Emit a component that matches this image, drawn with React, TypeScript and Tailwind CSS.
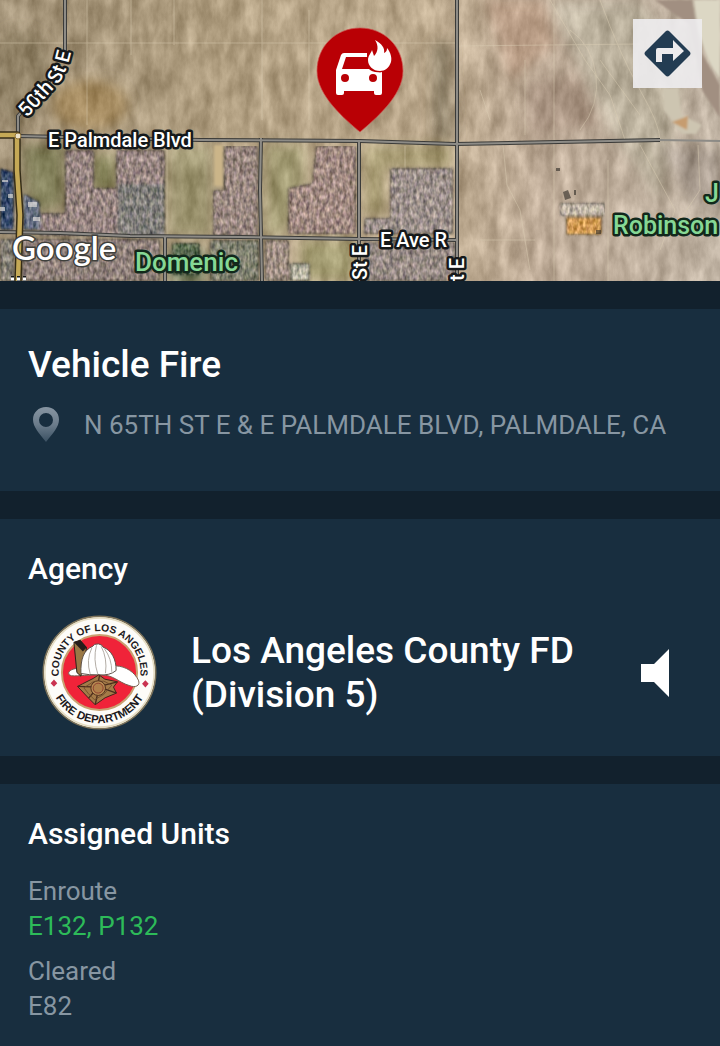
import type { ReactNode } from "react";

const mapLabel =
  "font-['Roboto',sans-serif] font-medium fill-white stroke-[#15181a] stroke-[5px] [paint-order:stroke] [stroke-linejoin:round]";
const placeLabel =
  "font-['Roboto',sans-serif] font-medium fill-[#86d895] stroke-[#12281b] stroke-[5px] [paint-order:stroke] [stroke-linejoin:round]";

const roads = [
  "M65 0V52M52 78L18 116V136",
  "M18 136L200 140L360 141L455 144L660 140",
  "M261 138L260 190L262 281",
  "M359 141V281",
  "M457 0V281",
  "M0 232L60 233L130 236L240 237L360 239L457 240",
  "M165 237V281",
];

function SatelliteMap() {
  return (
    <svg
      viewBox="0 0 720 281"
      preserveAspectRatio="xMidYMid slice"
      className="block h-[281px] w-full"
      role="img"
      aria-label="Satellite map of E Palmdale Blvd"
    >
      <defs>
        <linearGradient id="ground" x1="0" x2="1" y1="0" y2="0">
          <stop offset="0" stopColor="#a09075" />
          <stop offset="0.3" stopColor="#b09e80" />
          <stop offset="0.6" stopColor="#bca98d" />
          <stop offset="0.75" stopColor="#bfac98" />
          <stop offset="1" stopColor="#bfb2a2" />
        </linearGradient>
        <filter id="soft" x="-20%" y="-20%" width="140%" height="140%">
          <feGaussianBlur stdDeviation="6" />
        </filter>
        <filter id="edge" x="-20%" y="-20%" width="140%" height="140%">
          <feGaussianBlur stdDeviation="1.2" />
        </filter>
        <filter id="terrain" x="0" y="0" width="100%" height="100%" colorInterpolationFilters="sRGB">
          <feTurbulence type="fractalNoise" baseFrequency="0.07 0.03" numOctaves="5" seed="8" />
          <feGaussianBlur stdDeviation="0.6" />
          <feColorMatrix values="1 0 0 0 0  1 0 0 0 0  1 0 0 0 0  0 0 0 0 1" result="n" />
          <feComposite in="SourceGraphic" in2="n" operator="arithmetic" k1="0" k2="1" k3="0.34" k4="-0.17" />
          <feComposite in2="SourceGraphic" operator="in" />
        </filter>
        <filter id="houses" x="0" y="0" width="100%" height="100%" colorInterpolationFilters="sRGB">
          <feGaussianBlur in="SourceGraphic" stdDeviation="1.5" result="s" />
          <feTurbulence type="fractalNoise" baseFrequency="0.3 0.16" numOctaves="2" seed="3" />
          <feGaussianBlur stdDeviation="0.7" />
          <feColorMatrix values="1 0 0 0 0  0.9 0.1 0 0 0  0.85 0 0.15 0 0  0 0 0 0 1" result="n" />
          <feComposite in="s" in2="n" operator="arithmetic" k1="0" k2="1" k3="0.65" k4="-0.32" />
          <feComposite in2="s" operator="in" />
        </filter>
      </defs>

      <g filter="url(#terrain)">
        <rect width="720" height="281" fill="url(#ground)" />
        <g filter="url(#soft)">
          <ellipse cx="20" cy="75" rx="32" ry="45" fill="#918266" />
          <ellipse cx="90" cy="105" rx="38" ry="25" fill="#a58b60" />
          <path d="M22 145H64V205L30 215Z" fill="#807e59" />
          <path d="M92 155H116V190H92Z" fill="#85835a" />
          <path d="M168 145H212V236H168Z" fill="#a09873" />
          <path d="M265 145H305V190L283 235H265Z" fill="#a19a72" />
          <path d="M364 145H452V168H385V215H364Z" fill="#a99d74" />
          <path d="M300 240H355V281H300Z" fill="#a19a70" />
          <path d="M432 45L450 40L455 140H432Z" fill="#8d8068" />
          <path d="M485 0H545L555 45L510 80Z" fill="#b79b84" />
          <path d="M525 85L580 75L600 125L530 135Z" fill="#a5907e" />
          <path d="M548 0H640L690 60L660 200L610 130Z" fill="#b9af9b" />
          <path d="M660 145L720 150V210L690 200Z" fill="#a6998c" />
          <path d="M170 250H205V281H170Z" fill="#66785a" />
        </g>
      </g>
      <g filter="url(#edge)">
        <path d="M655 0H692L700 50L720 85V118L702 90L690 25Z" fill="#a18f81" />
        <path d="M694 0H720V78C708 65 697 35 694 0Z" fill="#dcd7c4" />
        <path d="M663 88H678L682 115L702 125L696 134H682L664 110Z" fill="#cdc5b1" />
        <path d="M672 122L688 116L687 130Z" fill="#c69c70" />
        <path d="M214 145H223V186H214Z" fill="#cbb589" />
      </g>
      <g fill="none" stroke="#dccfb5" strokeWidth="1" opacity="0.45">
        <path d="M0 43H455M457 46L640 44M87 0V125M131 0V55M174 0V45M262 0V120M309 10V120M554 0V281M608 160V281M480 240H535" />
        <path d="M167 140V237M405 146V170M480 90L490 120M503 145L507 185L520 210L530 270M550 0L585 60L610 95L625 140M600 60L640 115M640 145L675 210L660 250" />
        <path d="M600 0Q620 55 640 90T660 140M570 30Q592 45 596 75T580 130M698 145L700 190L680 220M525 60V135" />
      </g>

      <g filter="url(#houses)">
        <path d="M65 150H94V188H116V150H165V236H40V213H65Z" fill="#968480" />
        <path d="M118 184H165V236H118Z" fill="#7f7d79" />
        <path d="M224 146H258V236H213V190H224Z" fill="#998780" />
        <path d="M316 146H356V234H288V188L312 183Z" fill="#a08981" />
        <path d="M390 168H453V234H364V218H390Z" fill="#9b8f8a" />
        <path d="M364 242H455V281H364Z" fill="#968a84" />
        <path d="M22 239H160V281H22Z" fill="#8f807a" />
        <path d="M0 239H14V281H0Z" fill="#858076" />
        <path d="M210 240H259V281H210Z" fill="#7f806f" />
        <path d="M265 240H289V281H265Z" fill="#a08f84" />
        <path d="M0 168L14 172V230H0Z" fill="#384c6c" />
        <path d="M23 193L40 202V230H23Z" fill="#656f82" />
        <path d="M172 243H200V275H172Z" fill="#596b50" />
        <path d="M290 263H310V281H290Z" fill="#b3b09f" />
        <path d="M560 203H605V216H560Z" fill="#c2b7a8" />
        <path d="M566 217H602V235H566Z" fill="#d49d55" />
      </g>
      <g fill="#eee9e2" opacity="0.6">
        <path d="M28 202H37V207H28ZM33 217H40V221H33ZM8 194H13V198H8ZM2 180H8V182H2ZM0 207H5V211H0Z" />
      </g>
      <g fill="#37322d" opacity="0.65">
        <path d="M556 168H560V171H556ZM563 192L568 190L571 198L565 200ZM574 190H576V195H574ZM596 230H601V234H596Z" />
      </g>

      <g fill="none" strokeLinejoin="round">
        {roads.map((d) => (
          <path key={d} d={d} stroke="#3b3b39" strokeWidth="4" />
        ))}
        {roads.map((d) => (
          <path key={d} d={d} stroke="#8d8b86" strokeWidth="2" />
        ))}
        <path d="M660 140L720 141" stroke="#8d8b86" strokeWidth="2" />
        <path d="M0 135H17V170L20 215L18 281" stroke="#352d18" strokeWidth="7.5" />
        <path d="M0 135H17V170L20 215L18 281" stroke="#c5a956" strokeWidth="4.5" />
        <circle cx="18" cy="136" r="3" fill="#ebe3ca" stroke="#927437" />
      </g>

      <text x="48" y="147" fontSize="20" className={mapLabel}>E Palmdale Blvd</text>
      <text x="380" y="247" fontSize="20" className={mapLabel}>E Ave R</text>
      <path id="street" d="M27 118L59 83Q68 71 73 42" fill="none" />
      <text fontSize="20" className={mapLabel}>
        <textPath href="#street">50th St E</textPath>
      </text>
      <text transform="translate(367 280) rotate(-90)" fontSize="20" className={mapLabel}>St E</text>
      <text transform="translate(464 281) rotate(-90)" fontSize="20" className={mapLabel}>t E</text>
      <text x="135" y="271" fontSize="26" className={placeLabel}>Domenic</text>
      <text x="613" y="234" fontSize="25" className={placeLabel}>Robinson</text>
      <text x="705" y="202" fontSize="25" className={placeLabel}>J</text>
      <text
        x="12"
        y="260"
        fontSize="33"
        className="fill-white stroke-[#3f403c] stroke-[3px] font-['Lato',sans-serif] font-semibold [paint-order:stroke]"
      >
        Google
      </text>
      <path d="M11 279H14M17 279H20M23 279H26" stroke="#15181a" strokeWidth="6" />
      <path d="M11 279H14M17 279H20M23 279H26" stroke="#fff" strokeWidth="3" />

      <path
        d="M360 132C345 119 317 96 317 71C317 46 336 28 360 28S403 46 403 71C403 96 375 119 360 132Z"
        fill="#b90005"
        stroke="#cd5550"
        strokeWidth="0.7"
      />
      <path
        fill="#fff"
        fillRule="evenodd"
        d="M344 53H367V57H346L342 69H369C371 71 375 73 382 72V93Q382 95 380 95H376Q374 95 374 93V91H344V93Q344 95 342 95H338Q336 95 336 93V70L341 55Q342 53 344 53ZM345 74A4 4 0 1 0 345 82A4 4 0 1 0 345 74ZM373 74A4 4 0 1 0 373 82A4 4 0 1 0 373 74Z"
      />
      <path
        d="M375 40C382 44 385 48 384 53C386 52 387 51 387 48C391 53 392 58 391 62C389 68 385 71 380 71C373 71 368 66 368 60C368 56 371 53 372 50L374 56C378 52 379 46 375 40Z"
        fill="#fff"
        stroke="#b90005"
        strokeWidth="2.4"
        className="[paint-order:stroke]"
      />
    </svg>
  );
}

function DirectionsIcon() {
  return (
    <svg viewBox="0 0 69 69" className="size-full" aria-hidden="true">
      <path
        d="M32.5 12.5Q34.5 10.500 36.500 12.500L56.500 32.500Q58.500 34.500 56.500 36.500L36.500 56.500Q34.500 58.500 32.500 56.500L12.500 36.500Q10.500 34.500 12.500 32.500Z"
        fill="#233c52"
      />
      <path d="M23 43V31Q23 29 25 29H40V21L51 32L40 42V35H29V43Z" fill="#edecee" />
    </svg>
  );
}

function PinIcon() {
  return (
    <svg viewBox="0 0 28 36" className="h-9 w-7 shrink-0" aria-hidden="true">
      <defs>
        <linearGradient id="pin" x1="0" x2="0" y1="0" y2="1">
          <stop offset="0" stopColor="#8795a2" />
          <stop offset="0.5" stopColor="#6b7c8b" />
          <stop offset="1" stopColor="#3a5062" />
        </linearGradient>
      </defs>
      <path
        fill="url(#pin)"
        fillRule="evenodd"
        d="M14 0C6.500 0 1 5.500 1 12.500C1 20 7 26 14 35C21 26 27 20 27 12.500C27 5.500 21.500 0 14 0ZM14 6A7 7 0 1 1 14 20A7 7 0 1 1 14 6Z"
      />
    </svg>
  );
}

function AgencySeal() {
  return (
    <svg
      viewBox="36 27 346 346"
      className="size-[115px] shrink-0"
      role="img"
      aria-label="County of Los Angeles Fire Department seal"
    >
      <defs>
        <path id="sealTop" d="M94 242A123 123 0 1 1 324 242" />
        <path id="sealBottom" d="M57 200A152 152 0 0 0 361 200" />
      </defs>
      <circle cx="209" cy="200" r="169" fill="#fdfcf8" stroke="#7d735a" strokeWidth="5" />
      <circle cx="209" cy="200" r="164" fill="none" stroke="#e5dcc0" strokeWidth="4" />
      <circle cx="209" cy="200" r="113" fill="#f02339" stroke="#c9a071" strokeWidth="6" />
      <g className="fill-[#1d1a1d] font-['Liberation_Sans',sans-serif] font-bold" textAnchor="middle">
        <text fontSize="31">
          <textPath href="#sealTop" startOffset="50%">COUNTY OF LOS ANGELES</textPath>
        </text>
        <text fontSize="34">
          <textPath href="#sealBottom" startOffset="50%">FIRE DEPARTMENT</textPath>
        </text>
      </g>
      <path d="M72 221L82 232L72 243L62 232ZM347 223L357 234L347 245L337 234Z" fill="#ca3350" />
      <path
        d="M116 201C120 190 137 187 154 187L257 180C289 181 315 200 326 223C333 240 317 247 298 239C265 229 253 208 213 207C178 207 147 211 125 210Q115 208 116 201Z"
        fill="#fff"
        stroke="#786052"
        strokeWidth="3"
      />
      <path d="M132 109L151 103L170 126L153 211L141 200Z" fill="#9a7845" stroke="#2c2118" strokeWidth="3" />
      <path d="M132 109L151 103L171 124L159 137Z" fill="#251d1b" />
      <path
        d="M153 203C152 162 160 132 189 121Q192 113 206 114Q218 116 220 124C244 132 260 160 259 194Q240 210 207 207Q177 208 153 203Z"
        fill="#fff"
        stroke="#5d5149"
        strokeWidth="3"
      />
      <path
        d="M186 126Q168 163 181 204M200 118Q189 160 204 205M214 121Q233 158 227 202M224 129Q246 158 246 198"
        fill="none"
        stroke="#a39c94"
        strokeWidth="2.5"
      />
      <path
        d="M207 207L225 220L263 228L251 244L260 262L226 276L196 297L176 277L143 242L158 234L190 218Z"
        fill="#a47b48"
        stroke="#40251b"
        strokeWidth="3"
      />
      <path d="M143 242L185 243M260 262L226 250M209 209L206 226M196 297L202 270M176 277L190 261M263 228L224 238" fill="none" stroke="#4a2d1c" strokeWidth="4" />
      <path d="M162 246L190 228L222 226L246 238L222 266L194 282L176 264Z" fill="none" stroke="#6d4a2a" strokeWidth="2.5" />
      <circle cx="205" cy="247" r="22" fill="#b88b52" stroke="#532f1d" strokeWidth="3" />
      <circle cx="205" cy="247" r="15" fill="#b07f4a" stroke="#8e4030" strokeWidth="3" />
    </svg>
  );
}

function Card({ className, children }: { className: string; children: ReactNode }) {
  return <section className={`bg-[#182e3f] px-7 ${className}`}>{children}</section>;
}

export default function App() {
  return (
    <main className="flex min-h-screen flex-col gap-7 bg-[#12212d] font-['Roboto',sans-serif] text-white">
      <div className="relative">
        <SatelliteMap />
        <button
          type="button"
          aria-label="Directions"
          className="absolute top-[19px] right-[18px] size-[69px] bg-[#eeedf0]/90"
        >
          <DirectionsIcon />
        </button>
      </div>

      <Card className="pt-8 pb-12">
        <h1 className="text-[37px] leading-[48px] font-medium">Vehicle Fire</h1>
        <div className="mt-[18px] flex items-center gap-6 pl-1">
          <PinIcon />
          <p className="text-[26px] leading-9 text-[#8796a2]">
            N 65TH ST E &amp; E PALMDALE BLVD, PALMDALE, CA
          </p>
        </div>
      </Card>

      <Card className="pt-8 pb-[26px]">
        <h2 className="text-[30px] leading-9 font-medium">Agency</h2>
        <div className="mt-7 flex items-center pl-3.5">
          <AgencySeal />
          <p className="ml-[34px] max-w-[420px] flex-1 text-[37px] leading-11 font-medium">
            Los Angeles County FD (Division 5)
          </p>
          <button type="button" aria-label="Listen to agency audio" className="mr-[22px] ml-auto">
            <svg viewBox="0 0 30 48" className="h-12 w-[30px]" aria-hidden="true">
              <path d="M1 15H14L29 0V48L14 33H1Z" fill="#fff" />
            </svg>
          </button>
        </div>
      </Card>

      <Card className="flex-1 pt-8 pb-5">
        <h2 className="text-[30px] leading-9 font-medium">Assigned Units</h2>
        <dl className="mt-[22px] text-[26px] leading-[35px] text-[#8796a2]">
          <dt>Enroute</dt>
          <dd className="text-[#2dbb59]">E132, P132</dd>
          <dt className="mt-2.5">Cleared</dt>
          <dd>E82</dd>
        </dl>
      </Card>
    </main>
  );
}
